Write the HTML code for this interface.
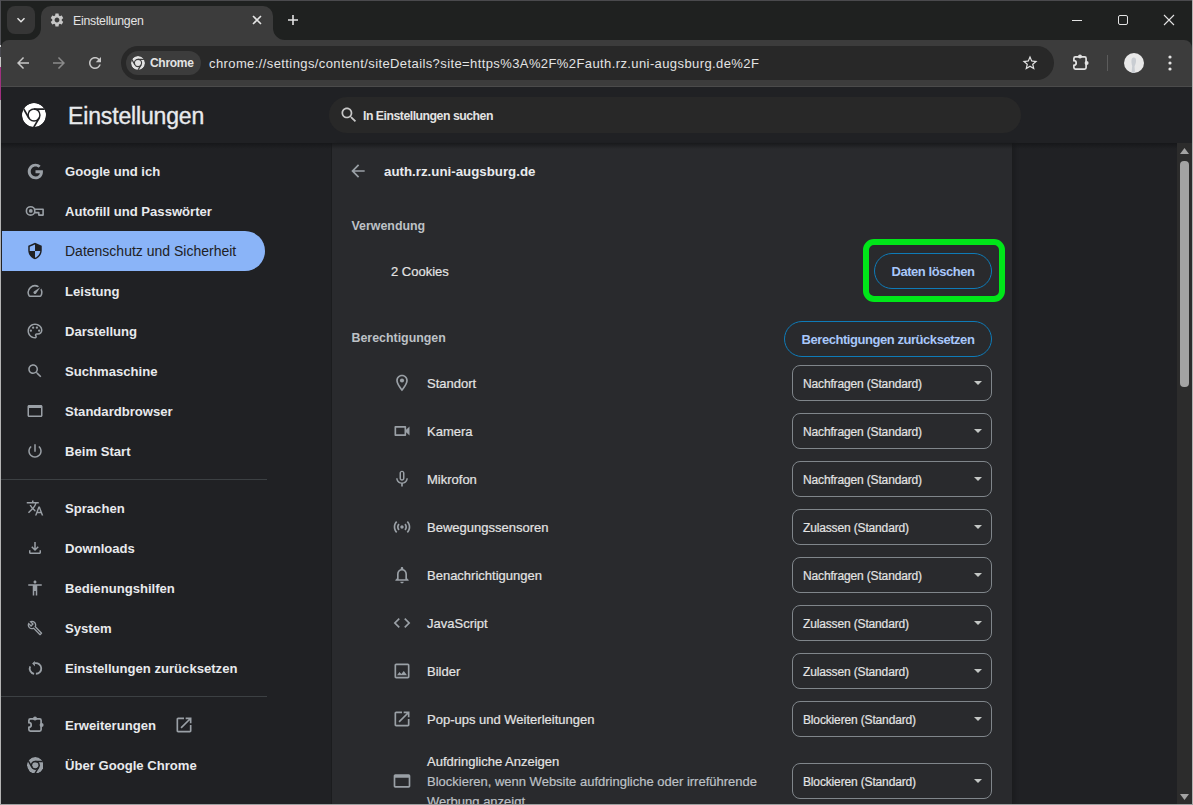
<!DOCTYPE html><html><head><meta charset="utf-8"><style>*{box-sizing:border-box;margin:0;padding:0}
html,body{width:1193px;height:805px;overflow:hidden;background:#1f2120;font-family:"Liberation Sans",sans-serif}
.a{position:absolute}
svg{position:absolute;display:block}
.t{position:absolute;white-space:nowrap;line-height:16px}
#frame{left:0;top:0;width:1193px;height:805px;background:#1f2120}
#topline{left:0;top:0;width:1193px;height:1px;background:#4a4a4d}
#tabsearch{left:7px;top:6px;width:28px;height:28px;border-radius:8px;background:#363636}
#tab{left:41px;top:6px;width:232px;height:40px;background:#3c3c3c;border-radius:10px 10px 0 0}
#toolbar{left:1px;top:40px;width:1191px;height:47px;background:#3c3c3c;border-radius:8px 8px 0 0}
#tbline{left:1px;top:86px;width:1191px;height:1px;background:#4b4b4b}
#omni{left:121px;top:46px;width:933px;height:34px;border-radius:17px;background:#282828}
#chip{left:126px;top:51px;width:75px;height:24px;border-radius:12px;background:#3c3c3c}
#page{left:1px;top:87px;width:1191px;height:717px;background:#202124}
#card{left:332px;top:143px;width:680px;height:661px;background:#292a2d;box-shadow:-1px 0 0 #1b1c1e,1px 0 0 #1b1c1e,4px 0 3px rgba(0,0,0,.12)}
#hdrshadow{left:1px;top:143px;width:1176px;height:6px;background:linear-gradient(rgba(20,21,23,.8),rgba(32,33,36,0))}
#search{left:329px;top:97px;width:692px;height:36px;border-radius:18px;background:#282828}
.sel{left:2px;top:231px;width:263px;height:40px;background:#8ab4f8;border-radius:0 20px 20px 0}
.nav{position:absolute;left:65px;font-size:13.1px;font-weight:700;color:#e8eaed;white-space:nowrap;line-height:16px}
.sep{position:absolute;left:1px;width:266px;height:1px;background:#3c4043}
.lbl{position:absolute;left:427px;font-size:13px;color:#e3e3e3;white-space:nowrap;line-height:16px;-webkit-text-stroke:0.2px currentColor}
.dd{position:absolute;left:792px;width:200px;height:36px;border:1px solid #80868b;border-radius:8px}
.dd span{position:absolute;left:10px;top:10px;letter-spacing:-0.15px;font-size:12px;color:#e3e3e3;-webkit-text-stroke:0.2px #e3e3e3;white-space:nowrap;line-height:16px}
.dd i{position:absolute;left:181px;top:15px;width:0;height:0;border-left:4px solid transparent;border-right:4px solid transparent;border-top:4px solid #c4c7c5}
.btn{position:absolute;height:36px;border:1px solid #0e7bb8;border-radius:18px;font-size:13px;font-weight:700;color:#a8c7fa;white-space:nowrap;line-height:36px;text-align:center;letter-spacing:-0.45px}
#scroll{left:1177px;top:143px;width:15px;height:661px;background:#2c2c2c}
#thumb{left:1180px;top:161px;width:9px;height:226px;border-radius:4px;background:#a3a3a3}
#rb{left:1192px;top:0;width:1px;height:805px;background:#b0b0b0}
#lb{left:0;top:0;width:1px;height:805px;background:linear-gradient(#505055 0,#505055 45px,#d0d0d0 45px,#d0d0d0 47px,#4a4a50 47px,#4a4a50 57px,#c8c8c8 57px,#c8c8c8 67px,#a0307f 67px,#a0307f 100px,#b4b4b4 100px)}
#bb{left:0;top:804px;width:1193px;height:1px;background:#a0a0a0}
#green{left:863px;top:239px;width:142px;height:63px;border:6px solid #00e619;border-radius:11px}
</style></head><body>
<div id="frame" class="a"></div><div id="topline" class="a"></div>
<div id="tabsearch" class="a"></div>
<svg style="left:15px;top:14px" width="12" height="12" viewBox="0 0 12 12"><path d="M2.5 4.2L6 7.7 9.5 4.2" stroke="#e3e3e3" stroke-width="1.5" fill="none"/></svg>
<div id="toolbar" class="a"></div>
<div id="tab" class="a"></div>
<svg style="left:29px;top:28px" width="12" height="12" viewBox="0 0 12 12"><path d="M0 12H12V0A12 12 0 0 1 0 12z" fill="#3c3c3c"/></svg>
<svg style="left:273px;top:28px" width="12" height="12" viewBox="0 0 12 12"><path d="M12 12H0V0A12 12 0 0 0 12 12z" fill="#3c3c3c"/></svg>
<svg style="left:49px;top:12px;color:#c7c7c7" width="16" height="16" viewBox="0 0 24 24" fill="#c7c7c7"><path d="M19.14 12.94c.04-.3.06-.61.06-.94 0-.32-.02-.64-.07-.94l2.03-1.58c.18-.14.23-.41.12-.61l-1.92-3.32c-.12-.22-.37-.29-.59-.22l-2.39.96c-.5-.38-1.03-.7-1.62-.94l-.36-2.54c-.04-.24-.24-.41-.48-.41h-3.84c-.24 0-.43.17-.47.41l-.36 2.54c-.59.24-1.130.57-1.62.94l-2.39-.96c-.22-.08-.47 0-.59.22L2.74 8.87c-.12.21-.08.47.12.61l2.03 1.58c-.05.3-.09.63-.09.94s.02.64.07.94l-2.03 1.58c-.18.14-.23.41-.12.61l1.92 3.32c.12.22.37.29.59.22l2.39-.96c.5.38 1.03.7 1.62.94l.36 2.54c.05.24.24.41.48.41h3.84c.24 0 .44-.17.47-.41l.36-2.54c.59-.24 1.13-.56 1.62-.94l2.39.96c.22.08.47 0 .59-.22l1.92-3.32c.12-.22.07-.47-.12-.61l-2.01-1.58zM12 15.6c-1.98 0-3.6-1.62-3.6-3.6s1.62-3.6 3.6-3.6 3.6 1.62 3.6 3.6-1.62 3.6-3.6 3.6z"/></svg>
<div class="t" style="left:73px;top:13px;font-size:12.3px;color:#e3e3e3;letter-spacing:-0.25px">Einstellungen</div>
<svg style="left:252px;top:15px" width="10" height="10" viewBox="0 0 10 10"><path d="M1 1L9 9M9 1L1 9" stroke="#e3e3e3" stroke-width="1.6"/></svg>
<svg style="left:287px;top:14px" width="12" height="12" viewBox="0 0 12 12"><path d="M6 1V11M1 6H11" stroke="#e3e3e3" stroke-width="1.6"/></svg>
<div class="a" style="left:1072px;top:20px;width:10px;height:1px;background:#e3e3e3"></div>
<div class="a" style="left:1118px;top:15px;width:10px;height:10px;border:1px solid #e3e3e3;border-radius:2px"></div>
<svg style="left:1163px;top:14px" width="12" height="12" viewBox="0 0 12 12"><path d="M1 1L11 11M11 1L1 11" stroke="#e3e3e3" stroke-width="1.1"/></svg>
<div id="tbline" class="a"></div>
<svg style="left:14px;top:54px;color:#c7c7c7" width="18" height="18" viewBox="0 0 24 24" fill="#c7c7c7"><path d="M20 11H7.83l5.59-5.59L12 4l-8 8 8 8 1.41-1.41L7.83 13H20v-2z"/></svg>
<svg style="left:50px;top:54px;color:#8a8a8a" width="18" height="18" viewBox="0 0 24 24" fill="#8a8a8a"><path d="M4 11h12.17l-5.59-5.59L12 4l8 8-8 8-1.41-1.41L16.17 13H4v-2z"/></svg>
<svg style="left:86px;top:54px;color:#c7c7c7" width="18" height="18" viewBox="0 0 24 24" fill="#c7c7c7"><path d="M17.65 6.35C16.2 4.9 14.21 4 12 4c-4.42 0-7.99 3.58-7.99 8s3.57 8 7.99 8c3.73 0 6.84-2.55 7.73-6h-2.08c-.82 2.33-3.04 4-5.65 4-3.31 0-6-2.690-6-6s2.69-6 6-6c1.66 0 3.14.69 4.22 1.78L13 11h7V4l-2.35 2.35z"/></svg>
<div id="omni" class="a"></div><div id="chip" class="a"></div>
<svg style="left:131px;top:56px;overflow:hidden" width="14" height="14" viewBox="0 0 14 14"><clipPath id="c13863"><circle cx="7" cy="7" r="7"/></clipPath><g clip-path="url(#c13863)"><circle cx="7" cy="7" r="7" fill="#e3e3e3"/><circle cx="7" cy="7" r="4.13" fill="#3c3c3c"/><circle cx="7" cy="7" r="3.03" fill="#e3e3e3"/><line x1="7.00" y1="3.42" x2="14.70" y2="3.42" stroke="#3c3c3c" stroke-width="1.30"/><line x1="3.90" y1="8.79" x2="0.05" y2="2.12" stroke="#3c3c3c" stroke-width="1.30"/><line x1="10.10" y1="8.79" x2="6.25" y2="15.46" stroke="#3c3c3c" stroke-width="1.30"/></g></svg>
<div class="t" style="left:150px;top:55px;font-size:12px;letter-spacing:-0.3px;font-weight:700;color:#e3e3e3">Chrome</div>
<div class="t" style="left:209px;top:56px;font-size:13px;letter-spacing:0.4px;color:#e3e3e3">chrome://settings/content/siteDetails?site=https%3A%2F%2Fauth.rz.uni-augsburg.de%2F</div>
<svg style="left:1021px;top:54px;color:#e3e3e3" width="18" height="18" viewBox="0 0 24 24" fill="#e3e3e3"><path d="M22 9.24l-7.19-.62L12 2 9.19 8.63 2 9.24l5.46 4.73L5.82 21 12 17.27 18.18 21l-1.63-7.03L22 9.24zM12 15.4l-3.76 2.27 1-4.28-3.32-2.88 4.38-.38L12 6.1l1.71 4.04 4.38.38-3.32 2.88 1 4.28L12 15.4z"/></svg>
<svg style="left:1065px;top:48px;color:#e3e3e3" width="30" height="30" viewBox="0 0 30 30" fill="#e3e3e3"><path d="M8.9 10.4Q8.9 8.9 10.4 8.9H19.6Q21.1 8.9 21.1 10.4V19.6Q21.1 21.1 19.6 21.1H10.4Q8.9 21.1 8.9 19.6V17.3A2.3 2.3 0 0 0 8.9 12.7Z" fill="none" stroke="currentColor" stroke-width="1.7"/><circle cx="15" cy="8.4" r="2"/><circle cx="21.6" cy="15" r="2"/></svg>
<div class="a" style="left:1107px;top:55px;width:1px;height:16px;background:#5c5c5c"></div>
<svg style="left:1124px;top:53px" width="20" height="20" viewBox="0 0 20 20"><circle cx="10" cy="10" r="10" fill="#e8e8e8"/><path d="M9.5 4.5C11.5 4.3 12.3 6 12 8.5 11.8 10.5 11 12 10.5 13.5L11 20H7.5L8.2 13C7.6 11 7.2 8.5 7.6 6.5 7.9 5.2 8.6 4.6 9.5 4.5Z" fill="#c9cdd2"/></svg>
<svg style="left:1160px;top:53px" width="20" height="20" viewBox="0 0 20 20" fill="#e3e3e3"><circle cx="10" cy="4" r="1.6"/><circle cx="10" cy="10" r="1.6"/><circle cx="10" cy="16" r="1.6"/></svg>
<div id="page" class="a"></div>
<div id="search" class="a"></div>
<svg style="left:339px;top:105px;color:#c7c7c7" width="20" height="20" viewBox="0 0 24 24" fill="#c7c7c7"><path d="M15.5 14h-.79l-.28-.27C15.41 12.59 16 11.11 16 9.5 16 5.91 13.09 3 9.5 3S3 5.91 3 9.5 5.91 16 9.5 16c1.61 0 3.09-.59 4.23-1.57l.27.28v.79l5 4.99L20.49 19l-4.99-5zm-6 0C7.01 14 5 11.99 5 9.5S7.01 5 9.5 5 14 7.01 14 9.5 11.99 14 9.5 14z"/></svg>
<div class="t" style="left:363px;top:108px;font-size:12.3px;font-weight:700;color:#e3e3e3;letter-spacing:-0.5px">In Einstellungen suchen</div>
<svg style="left:22px;top:103px;overflow:hidden" width="24" height="24" viewBox="0 0 24 24"><clipPath id="c34115"><circle cx="12" cy="12" r="12"/></clipPath><g clip-path="url(#c34115)"><circle cx="12" cy="12" r="12" fill="#ffffff"/><circle cx="12" cy="12" r="6.66" fill="#202124"/><circle cx="12" cy="12" r="5.20" fill="#ffffff"/><line x1="12.00" y1="6.07" x2="25.20" y2="6.07" stroke="#202124" stroke-width="1.68"/><line x1="6.87" y1="14.96" x2="0.27" y2="3.53" stroke="#202124" stroke-width="1.68"/><line x1="17.13" y1="14.96" x2="10.53" y2="26.40" stroke="#202124" stroke-width="1.68"/></g></svg>
<div class="t" style="left:68px;top:108px;font-size:23px;color:#e8eaed;letter-spacing:-0.15px;-webkit-text-stroke:0.35px #e8eaed">Einstellungen</div>
<div id="card" class="a"></div>
<div id="hdrshadow" class="a"></div>
<div class="a sel"></div>
<svg style="left:25.5px;top:161.5px;color:#9aa0a6" width="19" height="19" viewBox="0 0 24 24" fill="#9aa0a6"><path d="M12 10.2v3.9h5.5c-.25 1.4-1.7 4.1-5.5 4.1-3.3 0-6-2.75-6-6.2s2.7-6.2 6-6.2c1.9 0 3.15.8 3.85 1.5l2.65-2.55C16.8 3.2 14.6 2.2 12 2.2 6.6 2.2 2.2 6.6 2.2 12s4.4 9.8 9.8 9.8c5.65 0 9.4-4 9.4-9.6 0-.65-.07-1.15-.15-1.65H12z"/></svg>
<div class="nav" style="top:163.5px;color:#e8eaed">Google und ich</div>
<svg style="left:20px;top:196px;color:#9aa0a6" width="30" height="30" viewBox="0 0 30 30" fill="#9aa0a6"><circle cx="10.6" cy="14.9" r="4.2" fill="none" stroke="currentColor" stroke-width="1.6"/><circle cx="10.8" cy="14.9" r="1.9"/><path d="M14.6 13.3H23.1V19.1H18.8V16.6H14.4" fill="none" stroke="currentColor" stroke-width="1.6" stroke-linejoin="round"/></svg>
<div class="nav" style="top:203.5px;color:#e8eaed">Autofill und Passwörter</div>
<svg style="left:26px;top:242px;color:#202124" width="18" height="18" viewBox="0 0 24 24" fill="#202124"><path d="M12 1L3 5v6c0 5.55 3.84 10.74 9 12 5.16-1.26 9-6.45 9-12V5l-9-4zm0 10.99h7c-.53 4.12-3.28 7.79-7 8.94V12H5V6.3l7-3.11v8.8z"/></svg>
<div class="nav" style="top:243.2px;color:#202124;font-weight:400;font-size:14px">Datenschutz und Sicherheit</div>
<svg style="left:26px;top:282px;color:#9aa0a6" width="18" height="18" viewBox="0 0 24 24" fill="#9aa0a6"><path d="M20.38 8.57l-1.23 1.85a8 8 0 0 1-.22 7.58H5.07A8 8 0 0 1 15.58 6.85l1.85-1.23A10 10 0 0 0 3.35 19a2 2 0 0 0 1.72 1h13.85a2 2 0 0 0 1.74-1 10 10 0 0 0-.27-10.44zm-9.79 6.84a2 2 0 0 0 2.83 0l5.66-8.49-8.49 5.66a2 2 0 0 0 0 2.83z"/></svg>
<div class="nav" style="top:283.5px;color:#e8eaed">Leistung</div>
<svg style="left:26px;top:322px;color:#9aa0a6" width="18" height="18" viewBox="0 0 24 24" fill="#9aa0a6"><path d="M12 22C6.49 22 2 17.510 2 12S6.49 2 12 2s10 4.04 10 9c0 3.31-2.69 6-6 6h-1.77c-.28 0-.5.22-.5.5 0 .12.05.23.13.33.41.47.64 1.06.64 1.67 0 1.38-1.12 2.5-2.5 2.5zm0-18c-4.41 0-8 3.59-8 8s3.59 8 8 8c.28 0 .5-.22.5-.5 0-.16-.08-.28-.14-.35-.41-.46-.63-1.05-.63-1.65 0-1.38 1.12-2.5 2.5-2.5H16c2.21 0 4-1.79 4-4 0-3.86-3.59-7-8-7z"/><circle cx="6.5" cy="11.5" r="1.5"/><circle cx="9.5" cy="7.5" r="1.5"/><circle cx="14.5" cy="7.5" r="1.5"/><circle cx="17.5" cy="11.5" r="1.5"/></svg>
<div class="nav" style="top:323.5px;color:#e8eaed">Darstellung</div>
<svg style="left:26px;top:362px;color:#9aa0a6" width="18" height="18" viewBox="0 0 24 24" fill="#9aa0a6"><path d="M15.5 14h-.79l-.28-.27C15.41 12.59 16 11.11 16 9.5 16 5.91 13.09 3 9.5 3S3 5.91 3 9.5 5.91 16 9.5 16c1.61 0 3.09-.59 4.23-1.57l.27.28v.79l5 4.99L20.49 19l-4.99-5zm-6 0C7.01 14 5 11.99 5 9.5S7.01 5 9.5 5 14 7.01 14 9.5 11.99 14 9.5 14z"/></svg>
<div class="nav" style="top:363.5px;color:#e8eaed">Suchmaschine</div>
<svg style="left:26px;top:402px;color:#9aa0a6" width="18" height="18" viewBox="0 0 24 24" fill="#9aa0a6"><path d="M20 4H4c-1.11 0-2 .9-2 2v12c0 1.1.89 2 2 2h16c1.1 0 2-.9 2-2V6c0-1.1-.89-2-2-2zm0 14H4V8h16v10z"/></svg>
<div class="nav" style="top:403.5px;color:#e8eaed">Standardbrowser</div>
<svg style="left:26px;top:442px;color:#9aa0a6" width="18" height="18" viewBox="0 0 24 24" fill="#9aa0a6"><path d="M13 3h-2v10h2V3zm4.83 2.17l-1.42 1.42C17.99 7.86 19 9.81 19 12c0 3.87-3.13 7-7 7s-7-3.13-7-7c0-2.19 1.01-4.14 2.58-5.42L6.17 5.17C4.23 6.82 3 9.26 3 12c0 4.97 4.03 9 9 9s9-4.03 9-9c0-2.74-1.23-5.18-3.17-6.83z"/></svg>
<div class="nav" style="top:443.5px;color:#e8eaed">Beim Start</div>
<svg style="left:26px;top:499px;color:#9aa0a6" width="18" height="18" viewBox="0 0 24 24" fill="#9aa0a6"><path d="M12.87 15.07l-2.54-2.51.03-.03c1.74-1.94 2.98-4.17 3.71-6.53H17V4h-7V2H8v2H1v1.99h11.17C11.5 7.92 10.44 9.75 9 11.35 8.07 10.32 7.3 9.19 6.690 8h-2c.73 1.63 1.73 3.17 2.98 4.56l-5.09 5.02L4 19l5-5 3.11 3.11.76-2.04zM18.5 10h-2L12 22h2l1.12-3h4.75L21 22h2l-4.5-12zm-2.62 7l1.62-4.33L19.12 17h-3.24z"/></svg>
<div class="nav" style="top:500.5px;color:#e8eaed">Sprachen</div>
<svg style="left:26px;top:539px;color:#9aa0a6" width="18" height="18" viewBox="0 0 24 24" fill="#9aa0a6"><path d="M18 15v3H6v-3H4v3c0 1.1.9 2 2 2h12c1.1 0 2-.9 2-2v-3h-2zm-1-4l-1.41-1.41L13 12.17V4h-2v8.17L8.41 9.59 7 11l5 5 5-5z"/></svg>
<div class="nav" style="top:540.5px;color:#e8eaed">Downloads</div>
<svg style="left:26px;top:579px;color:#9aa0a6" width="18" height="18" viewBox="0 0 24 24" fill="#9aa0a6"><path d="M12 2c1.1 0 2 .9 2 2s-.9 2-2 2-2-.9-2-2 .9-2 2-2zm9 7h-6v13h-2v-6h-2v6H9V9H3V7h18v2z"/></svg>
<div class="nav" style="top:580.5px;color:#e8eaed">Bedienungshilfen</div>
<svg style="left:27px;top:620px;color:#9aa0a6" width="16" height="16" viewBox="0 0 24 24" fill="#9aa0a6"><path d="M22.61 18.99l-9.08-9.08c.93-2.34.45-5.1-1.44-7C9.79.61 6.21.4 3.66 2.26L7.5 6.11 6.08 7.52 2.25 3.69C.39 6.23.6 9.82 2.9 12.11c1.86 1.86 4.57 2.35 6.89 1.48l9.11 9.11c.39.39 1.02.39 1.41 0l2.3-2.3c.4-.38.4-1.01 0-1.41zm-3 1.6l-9.46-9.46c-.61.45-1.29.72-2 .82-1.36.2-2.79-.21-3.83-1.25C3.37 9.76 2.93 8.5 3 7.26l3.09 3.09 4.24-4.24-3.09-3.09c1.24-.07 2.49.37 3.44 1.310 1.08 1.08 1.49 2.57 1.24 3.96-.12.71-.42 1.37-.88 1.96l9.45 9.45-.88.89z"/></svg>
<div class="nav" style="top:620.5px;color:#e8eaed">System</div>
<svg style="left:26px;top:659px;color:#9aa0a6" width="18" height="18" viewBox="0 0 24 24" fill="#9aa0a6"><path d="M12 5.6A7.1 7.1 0 1 1 13.23 19.69M10.77 19.69A7.1 7.1 0 0 1 5.57 9.7" fill="none" stroke="currentColor" stroke-width="2.4"/><path d="M8.2 6.1L11.8 2.5V9.7Z"/></svg>
<div class="nav" style="top:660.5px;color:#e8eaed">Einstellungen zurücksetzen</div>
<svg style="left:20px;top:710px;color:#9aa0a6" width="30" height="30" viewBox="0 0 30 30" fill="#9aa0a6"><path d="M8.9 10.4Q8.9 8.9 10.4 8.9H19.6Q21.1 8.9 21.1 10.4V19.6Q21.1 21.1 19.6 21.1H10.4Q8.9 21.1 8.9 19.6V17.3A2.3 2.3 0 0 0 8.9 12.7Z" fill="none" stroke="currentColor" stroke-width="1.7"/><circle cx="15" cy="8.4" r="2"/><circle cx="21.6" cy="15" r="2"/></svg>
<div class="nav" style="top:717.5px;color:#e8eaed">Erweiterungen</div>
<svg style="left:26.499999999999996px;top:756.7px;overflow:hidden" width="16.6" height="16.6" viewBox="0 0 16.6 16.6"><clipPath id="c34.8765"><circle cx="8.3" cy="8.3" r="8.3"/></clipPath><g clip-path="url(#c34.8765)"><circle cx="8.3" cy="8.3" r="8.3" fill="#9aa0a6"/><circle cx="8.3" cy="8.3" r="4.61" fill="#202124"/><circle cx="8.3" cy="8.3" r="3.07" fill="#9aa0a6"/><line x1="8.30" y1="4.46" x2="17.43" y2="4.46" stroke="#202124" stroke-width="1.50"/><line x1="4.98" y1="10.22" x2="0.41" y2="2.31" stroke="#202124" stroke-width="1.50"/><line x1="11.62" y1="10.22" x2="7.06" y2="18.13" stroke="#202124" stroke-width="1.50"/></g></svg>
<div class="nav" style="top:757.5px;color:#e8eaed">Über Google Chrome</div>
<svg style="left:174px;top:715px;color:#9aa0a6" width="20" height="20" viewBox="0 0 24 24" fill="#9aa0a6"><path d="M19 19H5V5h7V3H5c-1.11 0-2 .9-2 2v14c0 1.1.89 2 2 2h14c1.1 0 2-.9 2-2v-7h-2v7zM14 3v2h3.59l-9.83 9.83 1.41 1.41L19 6.41V10h2V3h-7z"/></svg>
<div class="sep" style="top:479px"></div><div class="sep" style="top:696px"></div>
<svg style="left:348px;top:161px;color:#9aa0a6" width="20" height="20" viewBox="0 0 24 24" fill="#9aa0a6"><path d="M20 11H7.83l5.59-5.59L12 4l-8 8 8 8 1.41-1.41L7.83 13H20v-2z"/></svg>
<div class="t" style="left:384px;top:163.5px;font-size:13.3px;font-weight:700;color:#e8eaed;line-height:16px">auth.rz.uni-augsburg.de</div>
<div class="t" style="left:351.5px;top:218.3px;font-size:12.4px;font-weight:700;color:#bdc1c6;line-height:16px">Verwendung</div>
<div class="t" style="left:391px;top:264px;font-size:13px;color:#e3e3e3;line-height:16px;-webkit-text-stroke:0.2px #e3e3e3">2 Cookies</div>
<div class="btn" style="left:874px;top:253px;width:118px">Daten löschen</div>
<div class="t" style="left:351.5px;top:329.7px;font-size:12.4px;font-weight:700;color:#bdc1c6;line-height:16px">Berechtigungen</div>
<div class="btn" style="left:784px;top:321px;width:208px">Berechtigungen zurücksetzen</div>
<svg style="left:392px;top:373px;color:#9aa0a6" width="20" height="20" viewBox="0 0 24 24" fill="#9aa0a6"><path d="M12 2C8.13 2 5 5.13 5 9c0 5.25 7 13 7 13s7-7.75 7-13c0-3.87-3.13-7-7-7zM7 9c0-2.76 2.24-5 5-5s5 2.24 5 5c0 2.88-2.88 7.190-5 9.88C9.92 16.21 7 11.85 7 9z"/><circle cx="12" cy="9" r="2.5"/></svg>
<div class="lbl" style="top:376px">Standort</div>
<div class="dd" style="top:365px"><span>Nachfragen (Standard)</span><i></i></div>
<svg style="left:392px;top:421px;color:#9aa0a6" width="20" height="20" viewBox="0 0 24 24" fill="#9aa0a6"><path d="M15 8v8H5V8h10m1-2H4c-.55 0-1 .45-1 1v10c0 .55.45 1 1 1h12c.55 0 1-.45 1-1v-3.5l4 4v-11l-4 4V7c0-.55-.45-1-1-1z"/></svg>
<div class="lbl" style="top:424px">Kamera</div>
<div class="dd" style="top:413px"><span>Nachfragen (Standard)</span><i></i></div>
<svg style="left:392px;top:469px;color:#9aa0a6" width="20" height="20" viewBox="0 0 24 24" fill="#9aa0a6"><path d="M12 14c1.66 0 2.99-1.34 2.99-3L15 5c0-1.66-1.34-3-3-3S9 3.34 9 5v6c0 1.66 1.34 3 3 3zm-1.2-9.1c0-.66.54-1.2 1.2-1.2.66 0 1.2.54 1.2 1.2l-.01 6.2c0 .66-.53 1.2-1.19 1.2-.66 0-1.2-.54-1.2-1.2V4.9zm6.5 6.1c0 3-2.54 5.1-5.3 5.1S6.7 14 6.7 11H5c0 3.41 2.72 6.23 6 6.72V21h2v-3.28c3.28-.48 6-3.3 6-6.72h-1.7z"/></svg>
<div class="lbl" style="top:472px">Mikrofon</div>
<div class="dd" style="top:461px"><span>Nachfragen (Standard)</span><i></i></div>
<svg style="left:392px;top:517px;color:#9aa0a6" width="20" height="20" viewBox="0 0 24 24" fill="#9aa0a6"><path d="M7.76 16.24C6.670 15.16 6 13.66 6 12s.67-3.16 1.76-4.24l1.42 1.42C8.45 9.9 8 10.9 8 12c0 1.1.45 2.1 1.17 2.83l-1.41 1.41zm8.48 0C17.33 15.16 18 13.66 18 12s-.67-3.16-1.76-4.24l-1.42 1.42C15.55 9.9 16 10.9 16 12c0 1.1-.45 2.1-1.17 2.83l1.41 1.41zM12 10c-1.1 0-2 .9-2 2s.9 2 2 2 2-.9 2-2-.9-2-2-2zm8 2c0 2.21-.9 4.21-2.35 5.65l1.42 1.42C20.88 17.26 22 14.76 22 12s-1.12-5.26-2.93-7.07l-1.42 1.42C19.1 7.79 20 9.79 20 12zM6.35 6.35L4.93 4.93C3.12 6.74 2 9.24 2 12s1.12 5.26 2.93 7.07l1.42-1.42C4.9 16.21 4 14.21 4 12s.9-4.21 2.35-5.65z"/></svg>
<div class="lbl" style="top:520px">Bewegungssensoren</div>
<div class="dd" style="top:509px"><span>Zulassen (Standard)</span><i></i></div>
<svg style="left:392px;top:565px;color:#9aa0a6" width="20" height="20" viewBox="0 0 24 24" fill="#9aa0a6"><path d="M12 22c1.1 0 2-.9 2-2h-4c0 1.1.89 2 2 2zm6-6v-5c0-3.07-1.64-5.64-4.5-6.32V4c0-.83-.67-1.5-1.5-1.5s-1.5.67-1.5 1.5v.68C7.63 5.36 6 7.92 6 11v5l-2 2v1h16v-1l-2-2zm-2 1H8v-6c0-2.48 1.51-4.5 4-4.5s4 2.02 4 4.5v6z"/></svg>
<div class="lbl" style="top:568px">Benachrichtigungen</div>
<div class="dd" style="top:557px"><span>Nachfragen (Standard)</span><i></i></div>
<svg style="left:392px;top:613px;color:#9aa0a6" width="20" height="20" viewBox="0 0 24 24" fill="#9aa0a6"><path d="M9.4 16.6L4.8 12l4.6-4.6L8 6l-6 6 6 6 1.4-1.4zm5.2 0l4.6-4.6-4.6-4.6L16 6l6 6-6 6-1.4-1.4z"/></svg>
<div class="lbl" style="top:616px">JavaScript</div>
<div class="dd" style="top:605px"><span>Zulassen (Standard)</span><i></i></div>
<svg style="left:392px;top:661px;color:#9aa0a6" width="20" height="20" viewBox="0 0 24 24" fill="#9aa0a6"><path d="M19 5v14H5V5h14m0-2H5c-1.1 0-2 .9-2 2v14c0 1.1.9 2 2 2h14c1.1 0 2-.9 2-2V5c0-1.1-.9-2-2-2zm-4.86 8.86l-3 3.87L9 13.14 6 17h12l-3.86-5.14z"/></svg>
<div class="lbl" style="top:664px">Bilder</div>
<div class="dd" style="top:653px"><span>Zulassen (Standard)</span><i></i></div>
<svg style="left:392px;top:709px;color:#9aa0a6" width="20" height="20" viewBox="0 0 24 24" fill="#9aa0a6"><path d="M19 19H5V5h7V3H5c-1.11 0-2 .9-2 2v14c0 1.1.89 2 2 2h14c1.1 0 2-.9 2-2v-7h-2v7zM14 3v2h3.59l-9.83 9.83 1.41 1.41L19 6.41V10h2V3h-7z"/></svg>
<div class="lbl" style="top:712px">Pop-ups und Weiterleitungen</div>
<div class="dd" style="top:701px"><span>Blockieren (Standard)</span><i></i></div>
<svg style="left:392px;top:771px;color:#9aa0a6" width="20" height="20" viewBox="0 0 24 24" fill="#9aa0a6"><path d="M20 4H4c-1.11 0-2 .9-2 2v12c0 1.1.89 2 2 2h16c1.1 0 2-.9 2-2V6c0-1.1-.89-2-2-2zm0 14H4V8h16v10z"/></svg>
<div class="lbl" style="top:754px">Aufdringliche Anzeigen</div>
<div class="lbl" style="top:774px;color:#bdc1c6">Blockieren, wenn Website aufdringliche oder irreführende</div>
<div class="lbl" style="top:794px;color:#bdc1c6">Werbung anzeigt</div>
<div class="dd" style="top:763px"><span>Blockieren (Standard)</span><i></i></div>
<div id="scroll" class="a"></div><div id="thumb" class="a"></div>
<svg style="left:1179px;top:147px" width="11" height="8" viewBox="0 0 11 8"><path d="M5.5 1L10 7H1z" fill="#a3a3a3"/></svg>
<svg style="left:1179px;top:793px" width="11" height="8" viewBox="0 0 11 8"><path d="M5.5 7L10 1H1z" fill="#a3a3a3"/></svg>
<div id="green" class="a"></div>
<div id="lb" class="a"></div><div id="rb" class="a"></div><div id="bb" class="a"></div>
</body></html>
